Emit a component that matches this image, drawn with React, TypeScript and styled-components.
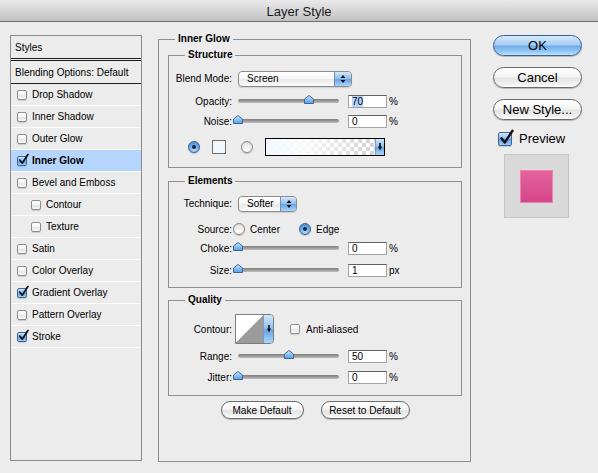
import React from 'react';
import styled, { createGlobalStyle, css } from 'styled-components';

const Global = createGlobalStyle`
  html, body { margin: 0; padding: 0; }
  body { background: #ececec; font-family: "Liberation Sans", Arial, sans-serif; color: #000; }
`;

const Dialog = styled.div`
  width: 598px;
  height: 473px;
  background: #ececec;
  display: flex;
  flex-direction: column;
  overflow: hidden;
  font-size: 10px;
`;

const TitleBar = styled.div`
  box-sizing: border-box;
  height: 22px;
  padding-top: 2px;
  border-bottom: 1px solid #6e6e6e;
  background: linear-gradient(#e9e9e9, #d6d6d6 50%, #c1c1c1);
  display: flex;
  align-items: center;
  justify-content: center;
  font-size: 13px;
  color: #1a1a1a;
`;

const Body = styled.div`
  display: flex;
  align-items: flex-start;
  padding: 11px 0 0 10px;
`;

/* ---------- left list ---------- */
const StylesPanel = styled.div`
  box-sizing: border-box;
  width: 132px;
  height: 426px;
  margin-top: 2px;
  border: 1px solid #8c8c8c;
  display: flex;
  flex-direction: column;
`;

const PanelHeader = styled.div<{ $border: string }>`
  height: 22px;
  padding-left: 4px;
  display: flex;
  align-items: center;
  border-bottom: ${p => p.$border};
`;

const StyleRow = styled.div<{ $indent?: boolean; $selected?: boolean }>`
  height: 21px;
  display: flex;
  align-items: center;
  gap: 5px;
  padding-left: ${p => (p.$indent ? 20 : 6)}px;
  border-bottom: 1px solid #fbfbfb;
  background: ${p => (p.$selected ? '#b5d5fd' : 'transparent')};
  font-weight: ${p => (p.$selected ? 'bold' : 'normal')};
`;

/* ---------- checkbox ---------- */
const Box = styled.span<{ $size: number; $on?: boolean }>`
  position: relative;
  flex: none;
  box-sizing: border-box;
  width: ${p => p.$size}px;
  height: ${p => p.$size}px;
  border-radius: 2px;
  border: 1px solid ${p => (p.$on ? '#3f679c' : '#8e8e8e')};
  background: ${p =>
    p.$on
      ? 'linear-gradient(#cde4fb, #86b9ee 50%, #5b9de2 52%, #9acdf8)'
      : 'linear-gradient(#ffffff, #f3f3f3 50%, #e3e3e3 52%, #f8f8f8)'};
  box-shadow: 0 1px 1px rgba(0, 0, 0, 0.15);
`;

const Tick = styled.svg`
  position: absolute;
  left: 0;
  top: -3px;
  overflow: visible;
`;

function CheckBox({ on, size = 10 }: { on?: boolean; size?: number }) {
  return (
    <Box $size={size} $on={on}>
      {on && (
        <Tick width={size + 1} height={size + 1} viewBox="0 0 12 12">
          <path d="M2 6.6 L4.6 10 L10.8 0.6" fill="none" stroke="#101010" strokeWidth="1.9" strokeLinecap="round" strokeLinejoin="round" />
        </Tick>
      )}
    </Box>
  );
}

/* ---------- groups ---------- */
const Group = styled.fieldset<{ $mt?: number; $h?: number }>`
  margin: ${p => p.$mt ?? 0}px 0 0 0;
  padding: 0;
  min-width: 0;
  box-sizing: border-box;
  border: 1px solid #8f8f8f;
  ${p => p.$h && css`height: ${p.$h}px;`}
`;

const MainGroup = styled(Group)`
  width: 313px;
  margin-left: 16px;
  flex: none;
`;

const Legend = styled.legend`
  font-weight: bold;
  font-size: 10px;
  line-height: 12px;
  padding: 0 3px;
  margin-left: 16px;
`;

const GroupInner = styled.div`
  display: flex;
  flex-direction: column;
  padding: 4px 8px 0 9px;
`;

const GroupBody = styled.div<{ $pb: number }>`
  display: flex;
  flex-direction: column;
  padding-bottom: ${p => p.$pb}px;
`;

const Row = styled.div<{ $mt: number; $h: number; $pl?: number }>`
  display: flex;
  align-items: center;
  margin-top: ${p => p.$mt}px;
  height: ${p => p.$h}px;
  padding-left: ${p => p.$pl ?? 0}px;
`;

const FieldLabel = styled.span<{ $gap?: number }>`
  flex: none;
  width: 63px;
  margin-right: ${p => p.$gap ?? 6}px;
  text-align: right;
  white-space: nowrap;
`;

/* ---------- popup ---------- */
const Popup = styled.div<{ $w: number }>`
  display: flex;
  box-sizing: border-box;
  width: ${p => p.$w}px;
  height: 16px;
  border: 1px solid #8b8b8b;
  border-radius: 4px;
  overflow: hidden;
  background: linear-gradient(#ffffff, #f6f6f6 50%, #e9e9e9 52%, #fbfbfb);
  box-shadow: 0 1px 1px rgba(0, 0, 0, 0.12);
`;

const PopupText = styled.span`
  flex: 1;
  padding-left: 8px;
  line-height: 14px;
`;

const Stepper = styled.span<{ $w: number }>`
  flex: none;
  width: ${p => p.$w}px;
  display: flex;
  align-items: center;
  justify-content: center;
  border-left: 1px solid #6f8fb8;
  background: linear-gradient(#d3e6fb, #8fbdee 50%, #65a4e5 52%, #aad5fb);
`;

function StepArrows() {
  return (
    <svg width="6" height="10" viewBox="0 0 6 10">
      <path d="M0.5 4 L3 1 L5.5 4 Z M0.5 6 L3 9 L5.5 6 Z" fill="#111" />
    </svg>
  );
}

function DownArrow() {
  return (
    <svg width="4" height="8" viewBox="0 0 4 8">
      <path d="M1.2 0 H2.8 V3.5 H4 L2 7.5 L0 3.5 H1.2 Z" fill="#0d0d0d" />
    </svg>
  );
}

/* ---------- slider ---------- */
const Track = styled.div`
  position: relative;
  flex: none;
  width: 101px;
  height: 4px;
  border-radius: 2px;
  background: linear-gradient(#7c7c7c, #a2a2a2 60%, #bdbdbd);
`;

const ThumbSvg = styled.svg`
  position: absolute;
  top: -4px;
  margin-left: -5px;
`;

const NumberBox = styled.div`
  flex: none;
  box-sizing: border-box;
  width: 39px;
  height: 13px;
  margin-left: 9px;
  margin-right: 2px;
  background: #fff;
  border: 1px solid #a3a3a3;
  border-top-color: #616161;
  padding-left: 3px;
  line-height: 11px;
`;

const Selected = styled.span`
  background: #b5d5ff;
`;

function Slider({ value, shown, selected, unit }: { value: number; shown: string; selected?: boolean; unit: string }) {
  return (
    <>
      <Track>
        <ThumbSvg width="10" height="9" viewBox="0 0 10 9" style={{ left: `${value}%` }}>
          <defs>
            <linearGradient id="thumbg" x1="0" y1="0" x2="0" y2="1">
              <stop offset="0" stopColor="#d9ecff" />
              <stop offset="0.5" stopColor="#8cc0f2" />
              <stop offset="1" stopColor="#5a9fe6" />
            </linearGradient>
          </defs>
          <path d="M0.5 4 L5 0.5 L9.5 4 V8.5 H0.5 Z" fill="url(#thumbg)" stroke="#41679a" strokeWidth="1" />
        </ThumbSvg>
      </Track>
      <NumberBox>{selected ? <Selected>{shown}</Selected> : shown}</NumberBox>
      <span>{unit}</span>
    </>
  );
}

/* ---------- radio ---------- */
const Radio = styled.span<{ $on?: boolean; $ml?: number }>`
  flex: none;
  box-sizing: border-box;
  width: 12px;
  height: 12px;
  margin-left: ${p => p.$ml ?? 0}px;
  border-radius: 50%;
  display: flex;
  align-items: center;
  justify-content: center;
  border: 1px solid ${p => (p.$on ? '#3d6399' : '#8a8a8a')};
  background: ${p =>
    p.$on
      ? 'radial-gradient(circle at 50% 80%, #b6dafc, #6aa8e6 55%, #3f7cc6)'
      : 'radial-gradient(circle at 50% 80%, #ffffff, #ececec 55%, #cacaca)'};
  box-shadow: 0 1px 1px rgba(0, 0, 0, 0.2);
  &::after {
    content: '';
    width: 4px;
    height: 4px;
    border-radius: 50%;
    background: #1b2637;
    display: ${p => (p.$on ? 'block' : 'none')};
  }
`;

const Spaced = styled.span<{ $ml: number }>`
  margin-left: ${p => p.$ml}px;
  white-space: nowrap;
`;

const Swatch = styled.span`
  flex: none;
  box-sizing: border-box;
  width: 14px;
  height: 14px;
  margin-left: 12px;
  border: 1px solid #6e6e6e;
  background: #f3f8fd;
`;

const GradientPicker = styled.div`
  flex: none;
  display: flex;
  box-sizing: border-box;
  width: 120px;
  height: 18px;
  margin-left: 12px;
  border: 1px solid #000;
`;

const GradientStrip = styled.div`
  flex: 1;
  background:
    linear-gradient(to right, #f2f8ff 0%, rgba(255, 255, 255, 0.85) 35%, rgba(255, 255, 255, 0) 100%),
    conic-gradient(#d2d2d2 25%, #ffffff 0 50%, #d2d2d2 0 75%, #ffffff 0) 0 0 / 8px 8px;
`;

const DropTab = styled.div<{ $w: number }>`
  flex: none;
  width: ${p => p.$w}px;
  display: flex;
  align-items: center;
  justify-content: center;
  border-left: 1px solid #7b9cc6;
  background: linear-gradient(#d3e6fb, #8fbdee 50%, #65a4e5 52%, #aad5fb);
`;

/* ---------- contour ---------- */
const ContourPicker = styled.div`
  flex: none;
  display: flex;
  box-sizing: border-box;
  width: 39px;
  height: 30px;
  border: 1px solid #7d7d7d;
  border-radius: 0 4px 4px 0;
  overflow: hidden;
`;

const ContourCurve = styled.div`
  flex: 1;
  background: linear-gradient(to top left, #9b9b9b 50%, #ffffff 50%);
`;

const InlineCheck = styled.span<{ $ml: number }>`
  display: flex;
  align-items: center;
  gap: 6px;
  margin-left: ${p => p.$ml}px;
`;

/* ---------- buttons ---------- */
const PushButton = styled.div<{ $primary?: boolean }>`
  box-sizing: border-box;
  width: 89px;
  height: 21px;
  border-radius: 11px;
  display: flex;
  align-items: center;
  justify-content: center;
  font-size: 13px;
  color: #000;
  white-space: nowrap;
  border: 1px solid ${p => (p.$primary ? '#3f5f8c' : '#6b6b6b')};
  background: ${p =>
    p.$primary
      ? 'linear-gradient(#d8eafc 0%, #a7cdf3 45%, #72ade9 55%, #9cd0fb 88%, #c6e4ff 100%)'
      : 'linear-gradient(#ffffff 0%, #f4f4f4 45%, #e3e3e3 55%, #f3f3f3 88%, #ffffff 100%)'};
  box-shadow: 0 1px 1px rgba(0, 0, 0, 0.22);
`;

const SmallButton = styled(PushButton)<{ $w: number }>`
  width: ${p => p.$w}px;
  height: 18px;
  border-radius: 9px;
  font-size: 10px;
`;

const ButtonRow = styled.div`
  display: flex;
  justify-content: center;
  gap: 17px;
  margin-top: 5px;
  height: 18px;
`;

const RightColumn = styled.div`
  flex: none;
  width: 90px;
  margin: 2px 0 0 22px;
  display: flex;
  flex-direction: column;
  gap: 11px;
`;

const PreviewToggle = styled.div`
  display: flex;
  align-items: center;
  gap: 7px;
  height: 15px;
  padding-left: 5px;
  font-size: 13px;
`;

const PreviewBox = styled.div`
  box-sizing: border-box;
  width: 65px;
  height: 64px;
  margin: -3px 0 0 11px;
  border: 1px solid #c6c6c6;
  background: #d9d9d9;
  display: flex;
  align-items: center;
  justify-content: center;
`;

const PreviewSquare = styled.div`
  box-sizing: border-box;
  width: 33px;
  height: 33px;
  border: 1px solid #f27fb2;
  background: linear-gradient(#e2639c, #d4468a);
`;

const styleItems: { label: string; on?: boolean; selected?: boolean; indent?: boolean }[] = [
  { label: 'Drop Shadow' },
  { label: 'Inner Shadow' },
  { label: 'Outer Glow' },
  { label: 'Inner Glow', on: true, selected: true },
  { label: 'Bevel and Emboss' },
  { label: 'Contour', indent: true },
  { label: 'Texture', indent: true },
  { label: 'Satin' },
  { label: 'Color Overlay' },
  { label: 'Gradient Overlay', on: true },
  { label: 'Pattern Overlay' },
  { label: 'Stroke', on: true },
];

export default function App() {
  return (
    <Dialog>
      <Global />
      <TitleBar>Layer Style</TitleBar>
      <Body>
        <StylesPanel>
          <PanelHeader $border="3px double #1c1c1c">Styles</PanelHeader>
          <PanelHeader $border="1px solid #1c1c1c">Blending Options: Default</PanelHeader>
          {styleItems.map(item => (
            <StyleRow key={item.label} $indent={item.indent} $selected={item.selected}>
              <CheckBox on={item.on} />
              <span>{item.label}</span>
            </StyleRow>
          ))}
        </StylesPanel>

        <MainGroup $h={429}>
          <Legend>Inner Glow</Legend>
          <GroupInner>
            <Group>
              <Legend>Structure</Legend>
              <GroupBody $pb={10}>
                <Row $mt={9} $h={17}>
                  <FieldLabel>Blend Mode:</FieldLabel>
                  <Popup $w={114}>
                    <PopupText>Screen</PopupText>
                    <Stepper $w={16}><StepArrows /></Stepper>
                  </Popup>
                </Row>
                <Row $mt={7} $h={14}>
                  <FieldLabel>Opacity:</FieldLabel>
                  <Slider value={70} shown="70" selected unit="%" />
                </Row>
                <Row $mt={6} $h={14}>
                  <FieldLabel>Noise:</FieldLabel>
                  <Slider value={0} shown="0" unit="%" />
                </Row>
                <Row $mt={9} $h={20} $pl={19}>
                  <Radio $on />
                  <Swatch />
                  <Radio $ml={15} />
                  <GradientPicker>
                    <GradientStrip />
                    <DropTab $w={8}><DownArrow /></DropTab>
                  </GradientPicker>
                </Row>
              </GroupBody>
            </Group>

            <Group $mt={7}>
              <Legend>Elements</Legend>
              <GroupBody $pb={10}>
                <Row $mt={8} $h={17}>
                  <FieldLabel>Technique:</FieldLabel>
                  <Popup $w={59}>
                    <PopupText>Softer</PopupText>
                    <Stepper $w={15}><StepArrows /></Stepper>
                  </Popup>
                </Row>
                <Row $mt={10} $h={14}>
                  <FieldLabel $gap={1}>Source:</FieldLabel>
                  <Radio />
                  <Spaced $ml={5}>Center</Spaced>
                  <Radio $on $ml={19} />
                  <Spaced $ml={5}>Edge</Spaced>
                </Row>
                <Row $mt={5} $h={14}>
                  <FieldLabel>Choke:</FieldLabel>
                  <Slider value={0} shown="0" unit="%" />
                </Row>
                <Row $mt={8} $h={14}>
                  <FieldLabel>Size:</FieldLabel>
                  <Slider value={0} shown="1" unit="px" />
                </Row>
              </GroupBody>
            </Group>

            <Group $mt={6}>
              <Legend>Quality</Legend>
              <GroupBody $pb={11}>
                <Row $mt={8} $h={30}>
                  <FieldLabel $gap={3}>Contour:</FieldLabel>
                  <ContourPicker>
                    <ContourCurve />
                    <DropTab $w={9}><DownArrow /></DropTab>
                  </ContourPicker>
                  <InlineCheck $ml={16}>
                    <CheckBox />
                    <span>Anti-aliased</span>
                  </InlineCheck>
                </Row>
                <Row $mt={5} $h={14}>
                  <FieldLabel>Range:</FieldLabel>
                  <Slider value={50} shown="50" unit="%" />
                </Row>
                <Row $mt={7} $h={14}>
                  <FieldLabel>Jitter:</FieldLabel>
                  <Slider value={0} shown="0" unit="%" />
                </Row>
              </GroupBody>
            </Group>

            <ButtonRow>
              <SmallButton $w={83}>Make Default</SmallButton>
              <SmallButton $w={89}>Reset to Default</SmallButton>
            </ButtonRow>
          </GroupInner>
        </MainGroup>

        <RightColumn>
          <PushButton $primary>OK</PushButton>
          <PushButton>Cancel</PushButton>
          <PushButton>New Style...</PushButton>
          <PreviewToggle>
            <CheckBox on size={14} />
            <span>Preview</span>
          </PreviewToggle>
          <PreviewBox>
            <PreviewSquare />
          </PreviewBox>
        </RightColumn>
      </Body>
    </Dialog>
  );
}
